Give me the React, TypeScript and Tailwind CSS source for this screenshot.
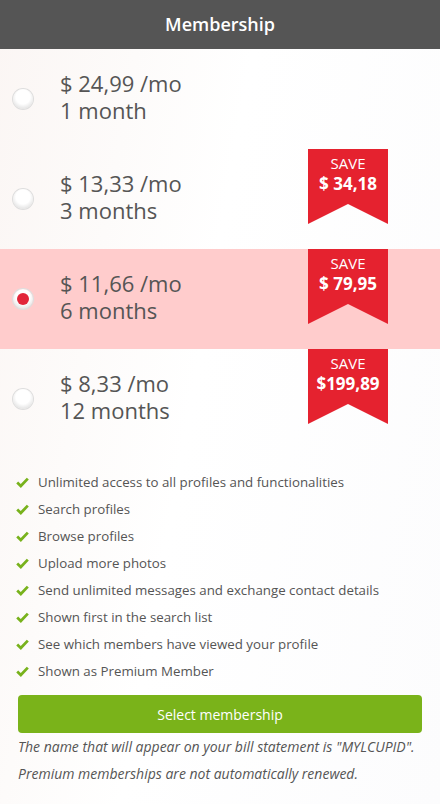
import React from "react";

const plans = [
  { price: "$ 24,99 /mo", dur: "1 month", save: null as string | null, selected: false },
  { price: "$ 13,33 /mo", dur: "3 months", save: "$ 34,18", selected: false },
  { price: "$ 11,66 /mo", dur: "6 months", save: "$ 79,95", selected: true },
  { price: "$ 8,33 /mo", dur: "12 months", save: "$199,89", selected: false },
];

const features = [
  "Unlimited access to all profiles and functionalities",
  "Search profiles",
  "Browse profiles",
  "Upload more photos",
  "Send unlimited messages and exchange contact details",
  "Shown first in the search list",
  "See which members have viewed your profile",
  "Shown as Premium Member",
];

function Radio({ on }: { on: boolean }) {
  return (
    <div className="w-[20px] h-[20px] rounded-full bg-[radial-gradient(circle_at_50%_40%,#ffffff_45%,#d0d0d0_100%)] shadow-[0_0_0_1px_#dedede] flex items-center justify-center">
      {on && <div className="w-[12px] h-[12px] rounded-full bg-[#e2263a]" />}
    </div>
  );
}

function Check() {
  return (
    <svg width="13" height="11" viewBox="0 0 13 11" className="shrink-0">
      <path d="M1.2 5.6 L4.8 9 L11.8 1.6" fill="none" stroke="#78b21c" strokeWidth="2.8" strokeLinejoin="miter" />
    </svg>
  );
}

export default function App() {
  return (
    <div
      className="w-[440px] h-[804px] overflow-hidden bg-[linear-gradient(100deg,#fbf6f4_0%,#fdfbfa_25%,#ffffff_45%,#fcfcfd_100%)] text-[#555555]"
      style={{ fontFamily: '"Open Sans", "Noto Sans", sans-serif' }}
    >
      <div className="h-[49px] bg-[#555555] flex items-center justify-center">
        <h1 className="text-white text-[18px] font-semibold">Membership</h1>
      </div>
      <div className="flex flex-col">
        {plans.map((p) => (
          <div
            key={p.dur}
            className={`h-[100px] flex items-start ${p.selected ? "bg-[#ffcccc]" : ""}`}
          >
            <div className="w-[60px] h-full flex items-center pl-[13px]">
              <Radio on={p.selected} />
            </div>
            <div className="flex-1 h-full flex flex-col justify-center text-[22px] leading-[27px] font-medium text-[#555555] pb-[4px]">
              <div>{p.price}</div>
              <div>{p.dur}</div>
            </div>
            {p.save && (
              <div className="mr-[52px] w-[80px] h-[75px] bg-[#e5222f] text-white flex flex-col items-center pt-[4px] [clip-path:polygon(0_0,100%_0,100%_100%,50%_73.3%,0_100%)]">
                <span className="text-[15px] leading-[20px]">SAVE</span>
                <span className="text-[17px] leading-[22px] font-bold">{p.save}</span>
              </div>
            )}
          </div>
        ))}
      </div>
      <ul className="mt-[20px] pl-[16px] flex flex-col">
        {features.map((f) => (
          <li key={f} className="h-[27px] flex items-center gap-[9px] text-[13.3px]">
            <Check />
            <span>{f}</span>
          </li>
        ))}
      </ul>
      <div className="px-[18px] mt-[10px]">
        <button className="w-full h-[38px] rounded-[4px] bg-[#7ab31a] text-white text-[14px]">
          Select membership
        </button>
        <p className="italic text-[14px] leading-[18px] mt-[5px] text-[#555555] whitespace-nowrap">
          The name that will appear on your bill statement is "MYLCUPID".
        </p>
        <p className="italic text-[14px] leading-[18px] mt-[9px] text-[#555555]">
          Premium memberships are not automatically renewed.
        </p>
      </div>
    </div>
  );
}
